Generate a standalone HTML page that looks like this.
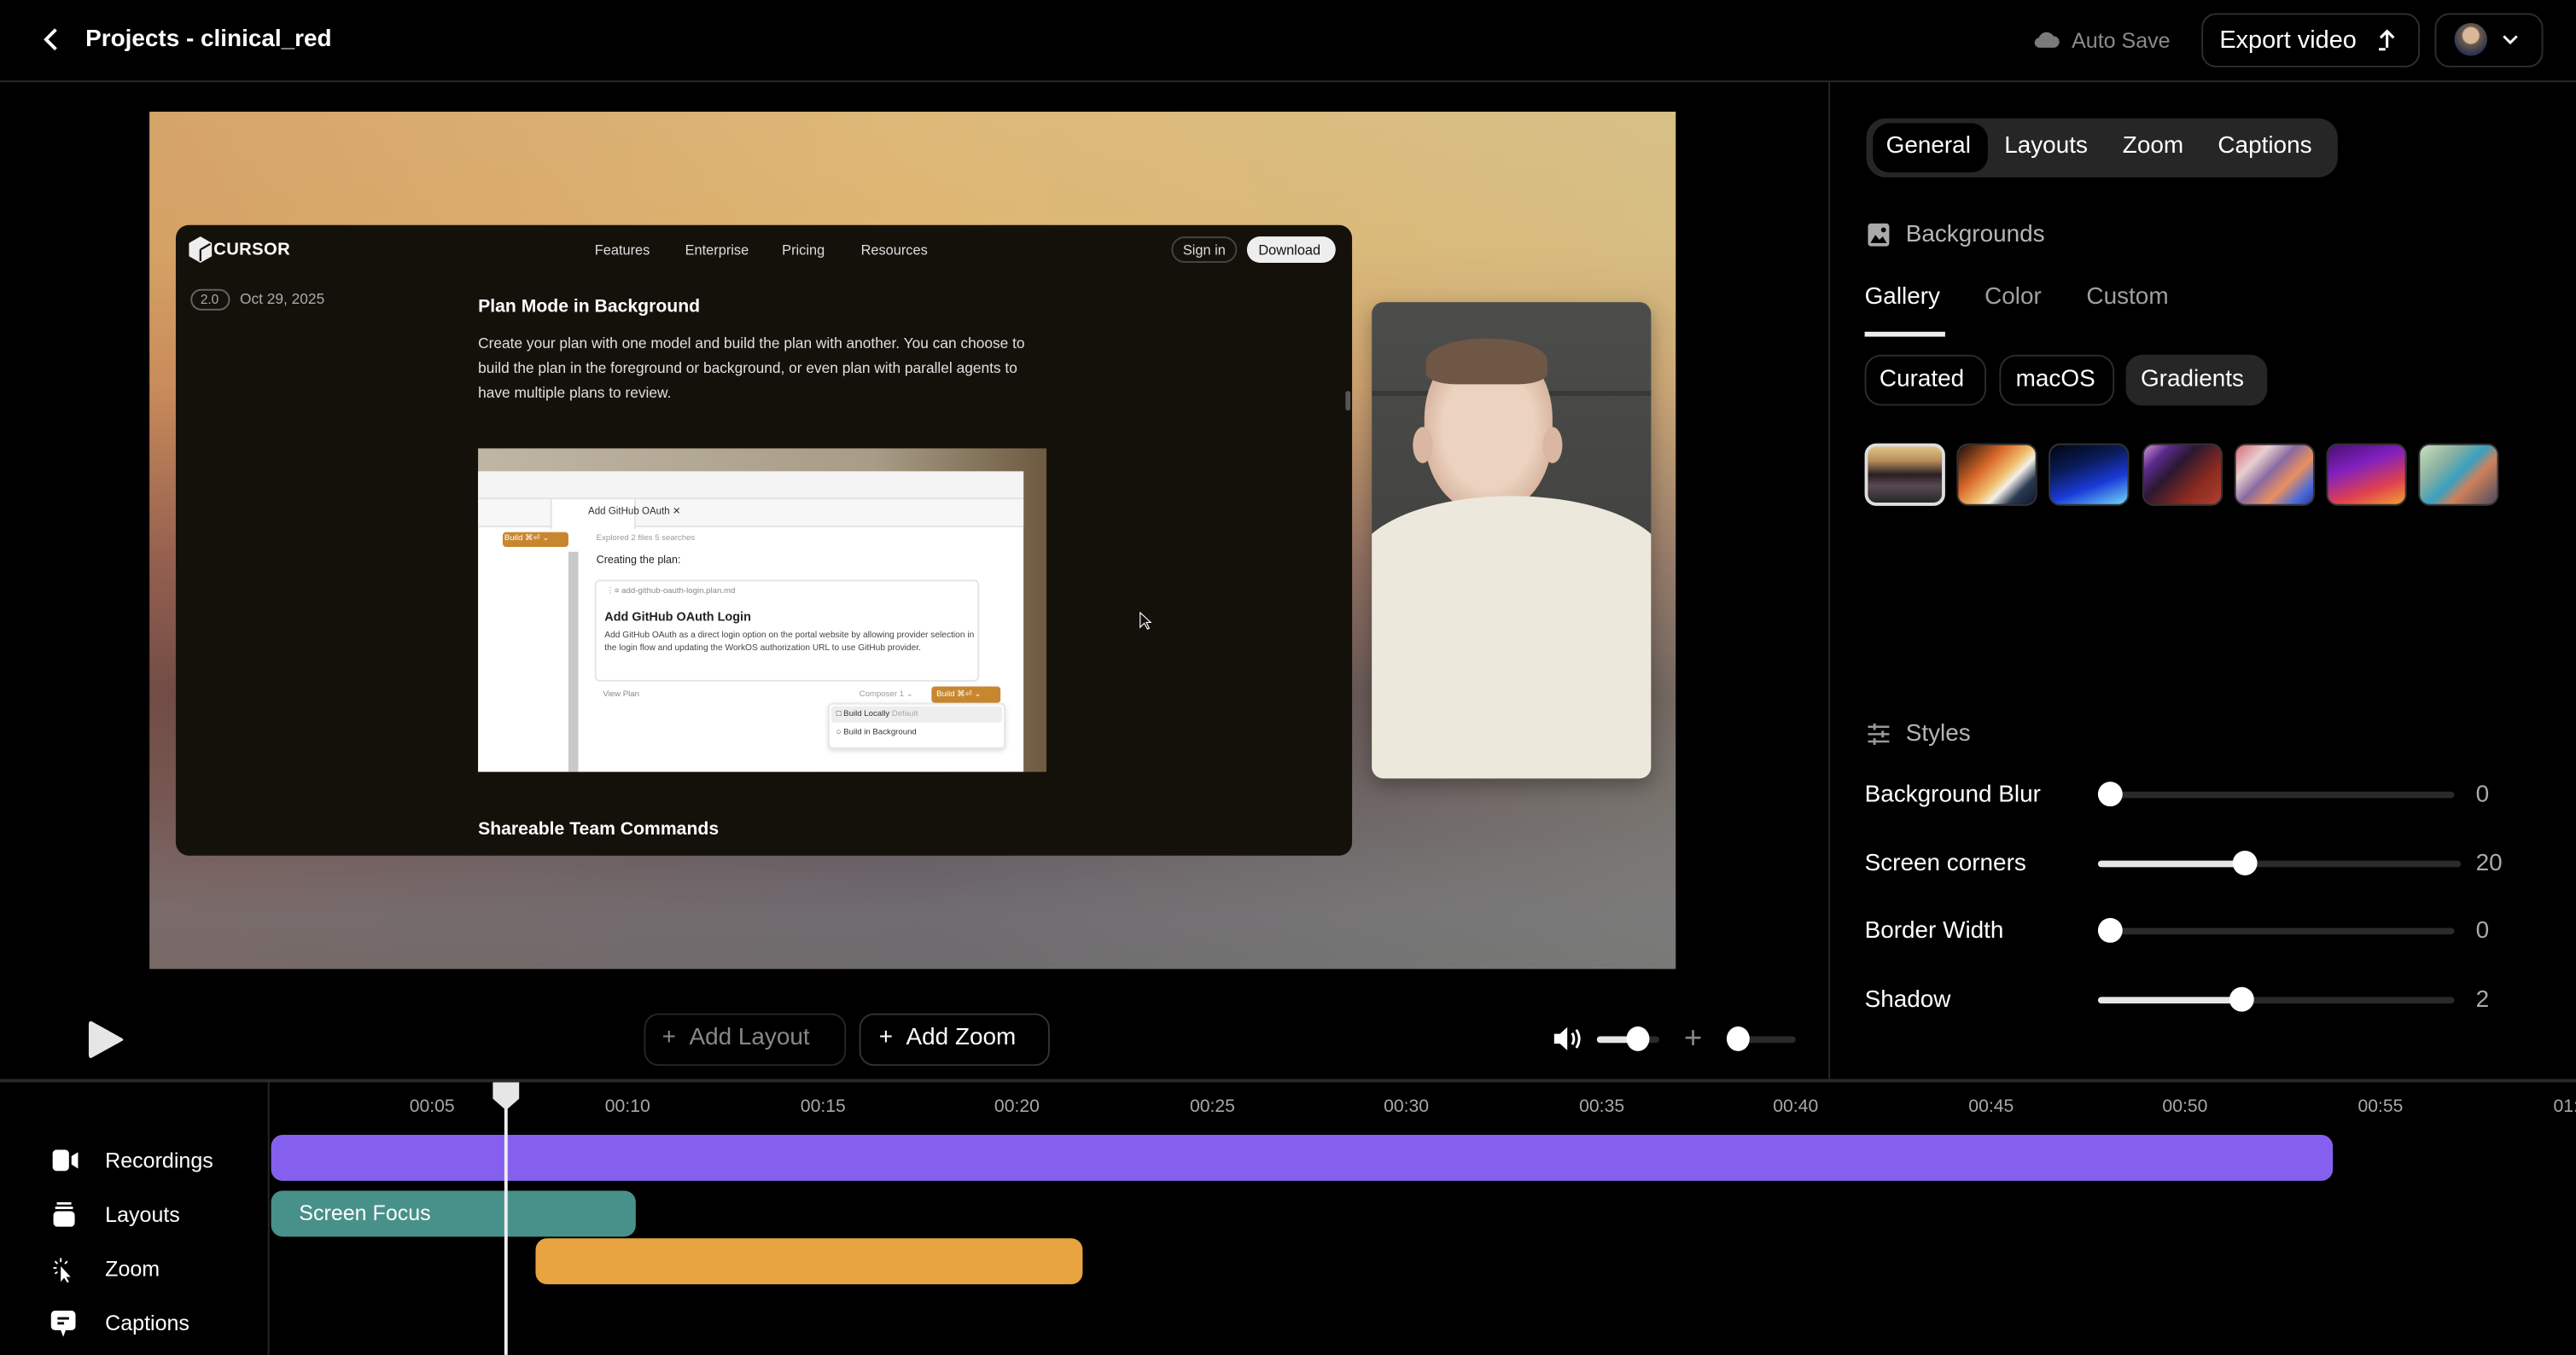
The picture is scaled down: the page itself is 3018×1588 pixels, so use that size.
<!DOCTYPE html>
<html><head><meta charset="utf-8">
<style>
*{margin:0;padding:0;box-sizing:border-box}
html,body{width:3018px;height:1588px;background:#000;overflow:hidden}
#w{position:absolute;left:0;top:0;width:1568px;height:825px;transform:scale(1.924745);transform-origin:0 0;font-family:"Liberation Sans",sans-serif;color:#fff}
.a{position:absolute}
.t{white-space:nowrap}
.btn{position:absolute;border:1px solid #2e2e2e;border-radius:9px}
.track{position:absolute;height:4px;background:#2a2a2a;border-radius:2px}
.fill{position:absolute;height:4px;background:#e6e6e6;border-radius:2px}
.knob{position:absolute;width:15px;height:15px;border-radius:50%;background:#fff}
.sw{position:absolute;top:270px;width:49px;height:38px;border-radius:7px;border:1px solid #333}
.tick{position:absolute;top:668px;font-size:11px;color:#a8a8a8;transform:translateX(-50%)}
.side{position:absolute;left:64px;font-size:13px;color:#fff}
</style></head><body><div id="w">
<!-- header -->
<svg class="a" style="left:24px;top:16px" width="14" height="16" viewBox="0 0 14 16"><path d="M10 2 L4 8 L10 14" stroke="#fff" stroke-width="2" fill="none"/></svg>
<div class="a t" style="left:52px;top:16px;font-size:14.5px;font-weight:bold">Projects - clinical_red</div>
<svg class="a" style="left:1238px;top:17px" width="16" height="14" viewBox="0 0 16 14"><path d="M4 12 H12 A3.5 3.5 0 0 0 12 5 A5 5 0 0 0 3 6 A3 3 0 0 0 4 12Z" fill="#7a7a7a"/></svg>
<div class="a t" style="left:1261px;top:17px;font-size:13px;color:#8a8a8a">Auto Save</div>
<div class="btn" style="left:1340px;top:8px;width:133px;height:33px"></div>
<div class="a t" style="left:1351px;top:16px;font-size:15px">Export video</div>
<svg class="a" style="left:1447px;top:16px" width="12" height="16" viewBox="0 0 12 16"><path d="M6 13 V3 M2 7 L6 3 L10 7 M1 14 H5" stroke="#fff" stroke-width="1.6" fill="none"/></svg>
<div class="btn" style="left:1482px;top:8px;width:66px;height:33px"></div>
<div class="a" style="left:1494px;top:14px;width:20px;height:20px;border-radius:50%;background:radial-gradient(circle at 50% 38%,#d9b89a 0 30%,#6d5a4a 35%,#2e3550 70%)"></div>
<svg class="a" style="left:1523px;top:20px" width="10" height="8" viewBox="0 0 10 8"><path d="M1 2 L5 6 L9 2" stroke="#fff" stroke-width="1.5" fill="none"/></svg>
<div class="a" style="left:0;top:49px;width:1568px;height:1px;background:#2a2a2a"></div>
<div class="a" style="left:1113px;top:50px;width:1px;height:607px;background:#262626"></div>

<!-- video frame -->
<div class="a" style="left:91px;top:68px;width:929px;height:522px;overflow:hidden;background:linear-gradient(180deg,#dcb679 0%,#dcb270 16%,#c99060 32%,#7a4e4e 52%,#433040 68%,#4e4558 84%,#6a6a72 100%)">
  <div class="a" style="left:0;top:0;width:929px;height:522px;background:linear-gradient(90deg,rgba(200,130,80,.35) 0%,rgba(235,205,120,.12) 50%,rgba(205,210,160,.35) 100%)"></div>
  <div class="a" style="left:0;top:420px;width:929px;height:102px;background:linear-gradient(180deg,rgba(0,0,0,0),rgba(110,110,120,.45) 70%,rgba(90,90,100,.4))"></div>
</div>
<!-- cursor window -->
<div class="a" style="left:107px;top:137px;width:716px;height:384px;background:#14110b;border-radius:8px;overflow:hidden">
  <svg class="a" style="left:8px;top:7px" width="14" height="16" viewBox="0 0 14 16"><path d="M7 0 L14 4 V12 L7 16 L0 12 V4Z" fill="#eee"/><path d="M7 8 L13 4.5 M7 8 V15" stroke="#14110b" stroke-width="1.2"/></svg>
  <div class="a t" style="left:23px;top:9px;font-size:10.5px;font-weight:bold;letter-spacing:.2px">CURSOR</div>
  <div class="a t" style="left:255px;top:10px;font-size:8.5px;color:#ddd">Features</div>
  <div class="a t" style="left:310px;top:10px;font-size:8.5px;color:#ddd">Enterprise</div>
  <div class="a t" style="left:369px;top:10px;font-size:8.5px;color:#ddd">Pricing</div>
  <div class="a t" style="left:417px;top:10px;font-size:8.5px;color:#ddd">Resources</div>
  <div class="a" style="left:606px;top:7px;width:40px;height:16px;border:1px solid #444;border-radius:8px"></div>
  <div class="a t" style="left:613px;top:10px;font-size:8.5px;color:#ddd">Sign in</div>
  <div class="a" style="left:652px;top:7px;width:54px;height:16px;background:#eee;border-radius:8px"></div>
  <div class="a t" style="left:659px;top:10px;font-size:8.5px;color:#111">Download</div>
  <div class="a" style="left:9px;top:39px;width:24px;height:13px;border:1px solid #666;border-radius:7px"></div>
  <div class="a t" style="left:15px;top:41px;font-size:8px;color:#aaa">2.0</div>
  <div class="a t" style="left:39px;top:40px;font-size:9px;color:#aaa">Oct 29, 2025</div>
  <div class="a t" style="left:184px;top:44px;font-size:11px;font-weight:bold">Plan Mode in Background</div>
  <div class="a" style="left:184px;top:65px;width:345px;font-size:9px;line-height:15px;color:#e0e0e0">Create your plan with one model and build the plan with another. You can choose to build the plan in the foreground or background, or even plan with parallel agents to have multiple plans to review.</div>
  <div class="a" style="left:184px;top:136px;width:346px;height:197px;background:linear-gradient(90deg,#bfb6a4,#a89c86 70%,#6d5a40);overflow:hidden">
    <div class="a" style="left:0;top:14px;width:332px;height:183px;background:#fff">
      <div class="a" style="left:0;top:0;width:332px;height:17px;background:#f4f4f4;border-bottom:1px solid #e3e3e3"></div>
      <div class="a" style="left:0;top:17px;width:332px;height:17px;background:#f7f7f7;border-bottom:1px solid #e3e3e3"></div>
      <div class="a" style="left:44px;top:17px;width:52px;height:18px;background:#fff;border-left:1px solid #e3e3e3;border-right:1px solid #e3e3e3"></div>
      <div class="a t" style="left:67px;top:21px;font-size:6px;color:#333">Add GitHub OAuth ✕</div>
      <div class="a" style="left:15px;top:37px;width:40px;height:9px;background:#c8872f;border-radius:2px"></div>
      <div class="a t" style="left:16px;top:38px;font-size:5px;color:#fff">Build ⌘⏎ ⌄</div>
      <div class="a" style="left:55px;top:49px;width:6px;height:134px;background:#c8c8c8"></div>
      <div class="a t" style="left:72px;top:38px;font-size:5px;color:#999">Explored 2 files 5 searches</div>
      <div class="a t" style="left:72px;top:51px;font-size:6.5px;color:#222">Creating the plan:</div>
      <div class="a" style="left:71px;top:66px;width:234px;height:62px;border:1px solid #e5e5e5;border-radius:3px"></div>
      <div class="a t" style="left:78px;top:70px;font-size:5px;color:#888">⋮≡ add-github-oauth-login.plan.md</div>
      <div class="a t" style="left:77px;top:84px;font-size:7.5px;font-weight:bold;color:#222">Add GitHub OAuth Login</div>
      <div class="a" style="left:77px;top:97px;width:225px;font-size:5.3px;line-height:7.5px;color:#444">Add GitHub OAuth as a direct login option on the portal website by allowing provider selection in the login flow and updating the WorkOS authorization URL to use GitHub provider.</div>
      <div class="a t" style="left:76px;top:133px;font-size:5px;color:#888">View Plan</div>
      <div class="a t" style="left:232px;top:133px;font-size:5px;color:#999">Composer 1 ⌄</div>
      <div class="a" style="left:276px;top:131px;width:42px;height:10px;background:#c8872f;border-radius:2px"></div>
      <div class="a t" style="left:279px;top:133px;font-size:5px;color:#fff">Build ⌘⏎ ⌄</div>
      <div class="a" style="left:213px;top:141px;width:108px;height:28px;background:#fff;border:1px solid #e8e8e8;border-radius:3px;box-shadow:0 1px 3px rgba(0,0,0,.15)"></div>
      <div class="a" style="left:215px;top:143px;width:104px;height:10px;background:#eee;border-radius:2px"></div>
      <div class="a t" style="left:218px;top:145px;font-size:5px;color:#333">□ Build Locally <span style="color:#aaa">Default</span></div>
      <div class="a t" style="left:218px;top:156px;font-size:5px;color:#333">○ Build in Background</div>
    </div>
  </div>
  <div class="a t" style="left:184px;top:362px;font-size:11px;font-weight:bold">Shareable Team Commands</div>
  <div class="a" style="left:712px;top:101px;width:3px;height:12px;background:#555;border-radius:2px"></div>
</div>
<svg class="a" style="left:693px;top:372px" width="8" height="12" viewBox="0 0 8 12"><path d="M1 1 V10 L3.5 7.5 L5.5 11 L6.5 10.5 L4.8 7 L7.5 7Z" fill="#111" stroke="#fff" stroke-width=".6"/></svg>
<!-- webcam -->
<div class="a" style="left:835px;top:184px;width:170px;height:290px;border-radius:7px;overflow:hidden;background:linear-gradient(180deg,#4c4d4b,#41423f 60%,#454643);box-shadow:0 4px 12px rgba(0,0,0,.3)">
  <div class="a" style="left:0;top:54px;width:170px;height:3px;background:#383937"></div>
  <div class="a" style="left:50px;top:100px;width:42px;height:40px;background:#d4b6a2;border-radius:30%"></div>
  <div class="a" style="left:32px;top:26px;width:78px;height:102px;background:radial-gradient(ellipse at 50% 50%,#ecd3c0 0 50%,#d9b7a2 72%,#b89580 100%);border-radius:44% 44% 46% 46%"></div>
  <div class="a" style="left:33px;top:22px;width:74px;height:28px;background:#6f5645;border-radius:50% 50% 25% 25%"></div>
  <div class="a" style="left:25px;top:76px;width:12px;height:22px;background:#d9b7a2;border-radius:50%"></div>
  <div class="a" style="left:104px;top:76px;width:12px;height:22px;background:#d9b7a2;border-radius:50%"></div>
  <div class="a" style="left:-10px;top:118px;width:190px;height:190px;background:#ede8dc;border-radius:50% 50% 0 0 / 22% 22% 0 0"></div>
</div>

<!-- controls -->
<svg class="a" style="left:53px;top:620px" width="24" height="26" viewBox="0 0 24 26"><path d="M3 2 Q1 1 1 4 V22 Q1 25 3 24 L21 14 Q23 13 21 12Z" fill="#e6e6e6"/></svg>
<div class="btn" style="left:392px;top:617px;width:123px;height:32px;border-color:#262626"></div>
<div class="a t" style="left:403px;top:624px;font-size:14.5px;color:#888">+ &nbsp;Add Layout</div>
<div class="btn" style="left:523px;top:617px;width:116px;height:32px;border-color:#333"></div>
<div class="a t" style="left:535px;top:624px;font-size:14.5px;color:#fff">+ &nbsp;Add Zoom</div>
<svg class="a" style="left:945px;top:624px" width="20" height="17" viewBox="0 0 20 17"><path d="M1 5.5 H4.5 L9 1.5 V15.5 L4.5 11.5 H1Z" fill="#fff"/><path d="M12 5 Q14 8.5 12 12 M14.5 3 Q18 8.5 14.5 14" stroke="#fff" stroke-width="1.5" fill="none"/></svg>
<div class="track" style="left:972px;top:631px;width:38px"></div>
<div class="fill" style="left:972px;top:631px;width:24px"></div>
<div class="knob" style="left:990px;top:625px;width:14px;height:15px"></div>
<div class="a t" style="left:1025px;top:622px;font-size:19px;color:#888">+</div>
<div class="track" style="left:1058px;top:631px;width:35px"></div>
<div class="knob" style="left:1051px;top:625px;width:14px;height:15px"></div>

<!-- right panel -->
<div class="a" style="left:1136px;top:72px;width:287px;height:36px;background:#262626;border-radius:12px"></div>
<div class="a" style="left:1140px;top:75px;width:70px;height:30px;background:#000;border-radius:10px"></div>
<div class="a t" style="left:1148px;top:81px;font-size:14.5px">General</div>
<div class="a t" style="left:1220px;top:81px;font-size:14.5px">Layouts</div>
<div class="a t" style="left:1292px;top:81px;font-size:14.5px">Zoom</div>
<div class="a t" style="left:1350px;top:81px;font-size:14.5px">Captions</div>
<svg class="a" style="left:1137px;top:136px" width="13" height="14" viewBox="0 0 13 14"><rect x="0" y="0" width="13" height="14" rx="2" fill="#aaa"/><path d="M1.5 12 L4.5 7 L7 10 L9 8 L11.5 12Z" fill="#000"/><circle cx="9.5" cy="4" r="1.5" fill="#000"/></svg>
<div class="a t" style="left:1160px;top:135px;font-size:14.5px;color:#b5b5b5">Backgrounds</div>
<div class="a t" style="left:1135px;top:173px;font-size:14.5px">Gallery</div>
<div class="a t" style="left:1208px;top:173px;font-size:14.5px;color:#a0a0a0">Color</div>
<div class="a t" style="left:1270px;top:173px;font-size:14.5px;color:#a0a0a0">Custom</div>
<div class="a" style="left:1135px;top:202px;width:49px;height:3px;background:#eee"></div>
<div class="btn" style="left:1135px;top:216px;width:74px;height:31px;border-color:#2c2c2c;border-radius:10px"></div>
<div class="a t" style="left:1144px;top:223px;font-size:14.5px">Curated</div>
<div class="btn" style="left:1217px;top:216px;width:70px;height:31px;border-color:#2c2c2c;border-radius:10px"></div>
<div class="a t" style="left:1227px;top:223px;font-size:14.5px">macOS</div>
<div class="a" style="left:1294px;top:216px;width:86px;height:31px;background:#262626;border-radius:10px"></div>
<div class="a t" style="left:1303px;top:223px;font-size:14.5px">Gradients</div>
<div class="sw" style="left:1135px;border:2px solid #ddd;background:linear-gradient(180deg,#e2c585 0%,#b88e5c 25%,#2a1e20 50%,#5a4a52 70%,#24282a 100%)"></div>
<div class="sw" style="left:1191px;background:linear-gradient(135deg,#1a0f0a 0%,#d9682a 35%,#f0c070 55%,#f4f0e8 65%,#2a3a52 80%,#0c1628 100%)"></div>
<div class="sw" style="left:1247px;background:linear-gradient(160deg,#020510 0%,#0a1c5a 35%,#1a3ad8 65%,#70d8f8 100%)"></div>
<div class="sw" style="left:1304px;background:linear-gradient(135deg,#d090d8 0%,#5a2a8a 20%,#2a1830 40%,#8a2a20 70%,#b04030 100%)"></div>
<div class="sw" style="left:1360px;background:linear-gradient(135deg,#d86a7a 0%,#e8d0d0 25%,#8a6aa0 45%,#e89060 65%,#4a6ad8 85%,#2a3aa0 100%)"></div>
<div class="sw" style="left:1416px;background:linear-gradient(160deg,#4a1070 0%,#8020c0 35%,#e04050 70%,#f0a030 100%)"></div>
<div class="sw" style="left:1472px;background:linear-gradient(135deg,#c8e0c0 0%,#8ab0a0 30%,#3aa0c0 50%,#d0805a 65%,#4a4a60 100%)"></div>

<svg class="a" style="left:1137px;top:440px" width="13" height="14" viewBox="0 0 13 14"><path d="M0 2.5 H13 M0 7 H13 M0 11.5 H13" stroke="#999" stroke-width="1.3"/><path d="M4 0.5 V4.5 M9 5 V9 M4 9.5 V13.5" stroke="#999" stroke-width="1.5"/></svg>
<div class="a t" style="left:1160px;top:439px;font-size:14.5px;color:#b5b5b5">Styles</div>

<div class="a t" style="left:1135px;top:476px;font-size:14.5px">Background Blur</div>
<div class="track" style="left:1277px;top:482px;width:217px"></div>
<div class="knob" style="left:1277px;top:476px"></div>
<div class="a t" style="left:1507px;top:476px;font-size:14.5px;color:#aaa">0</div>

<div class="a t" style="left:1135px;top:518px;font-size:14.5px">Screen corners</div>
<div class="track" style="left:1277px;top:524px;width:221px"></div>
<div class="fill" style="left:1277px;top:524px;width:90px"></div>
<div class="knob" style="left:1359px;top:518px"></div>
<div class="a t" style="left:1507px;top:518px;font-size:14.5px;color:#aaa">20</div>

<div class="a t" style="left:1135px;top:559px;font-size:14.5px">Border Width</div>
<div class="track" style="left:1277px;top:565px;width:217px"></div>
<div class="knob" style="left:1277px;top:559px"></div>
<div class="a t" style="left:1507px;top:559px;font-size:14.5px;color:#aaa">0</div>

<div class="a t" style="left:1135px;top:601px;font-size:14.5px">Shadow</div>
<div class="track" style="left:1277px;top:607px;width:217px"></div>
<div class="fill" style="left:1277px;top:607px;width:88px"></div>
<div class="knob" style="left:1357px;top:601px"></div>
<div class="a t" style="left:1507px;top:601px;font-size:14.5px;color:#aaa">2</div>

<!-- timeline -->
<div class="a" style="left:0;top:657px;width:1568px;height:2px;background:#2a2a2a"></div>
<div class="a" style="left:163px;top:659px;width:1px;height:166px;background:#262626"></div>
<div class="tick" style="left:263px">00:05</div>
<div class="tick" style="left:382px">00:10</div>
<div class="tick" style="left:501px">00:15</div>
<div class="tick" style="left:619px">00:20</div>
<div class="tick" style="left:738px">00:25</div>
<div class="tick" style="left:856px">00:30</div>
<div class="tick" style="left:975px">00:35</div>
<div class="tick" style="left:1093px">00:40</div>
<div class="tick" style="left:1212px">00:45</div>
<div class="tick" style="left:1330px">00:50</div>
<div class="tick" style="left:1449px">00:55</div>
<div class="tick" style="left:1568px">01:00</div>

<div class="a" style="left:165px;top:691px;width:1255px;height:28px;background:#8560ee;border-radius:7px"></div>
<div class="a" style="left:165px;top:725px;width:222px;height:28px;background:#48918a;border-radius:7px"></div>
<div class="a t" style="left:182px;top:731px;font-size:13px">Screen Focus</div>
<div class="a" style="left:326px;top:754px;width:333px;height:28px;background:#e8a440;border-radius:7px"></div>

<div class="a" style="left:307px;top:672px;width:1.5px;height:153px;background:#eee"></div>
<svg class="a" style="left:299px;top:659px" width="18" height="17" viewBox="0 0 18 17"><path d="M1 0 H17 V10 L9 17 L1 10Z" fill="#e6e6e6"/></svg>

<svg class="a" style="left:32px;top:700px" width="16" height="13" viewBox="0 0 16 13"><rect x="0" y="0" width="10" height="13" rx="2.5" fill="#fff"/><path d="M11.5 4 L15.5 1.5 V11.5 L11.5 9Z" fill="#fff"/></svg>
<div class="side" style="top:699px">Recordings</div>
<svg class="a" style="left:32px;top:732px" width="14" height="15" viewBox="0 0 14 15"><rect x="2.5" y="0" width="9" height="1.5" rx=".7" fill="#fff"/><rect x="1.5" y="2.7" width="11" height="1.5" rx=".7" fill="#fff"/><rect x="0.5" y="5.5" width="13" height="9.5" rx="2.5" fill="#fff"/></svg>
<div class="side" style="top:732px">Layouts</div>
<svg class="a" style="left:32px;top:765px" width="14" height="16" viewBox="0 0 14 16"><path d="M5 6 V15.5 L7 13 L9 16 L10 15.5 L8.3 12.5 L11 12.5Z" fill="#fff"/><path d="M5 1 V3.5 M1.5 3 L3 4.5 M0.5 7 H2.5 M9 3 L7.5 4.5 M1.5 10.5 L3 9.5" stroke="#fff" stroke-width="1"/></svg>
<div class="side" style="top:765px">Zoom</div>
<svg class="a" style="left:31px;top:798px" width="15" height="17" viewBox="0 0 15 17"><path d="M3 0 H12 Q15 0 15 3 V9 Q15 12 12 12 H9 L7.5 16 L6 12 H3 Q0 12 0 9 V3 Q0 0 3 0Z" fill="#fff"/><rect x="4" y="4" width="7" height="1.5" fill="#000"/><rect x="4" y="7" width="4" height="1.5" fill="#000"/></svg>
<div class="side" style="top:798px">Captions</div>
</div></body></html>
